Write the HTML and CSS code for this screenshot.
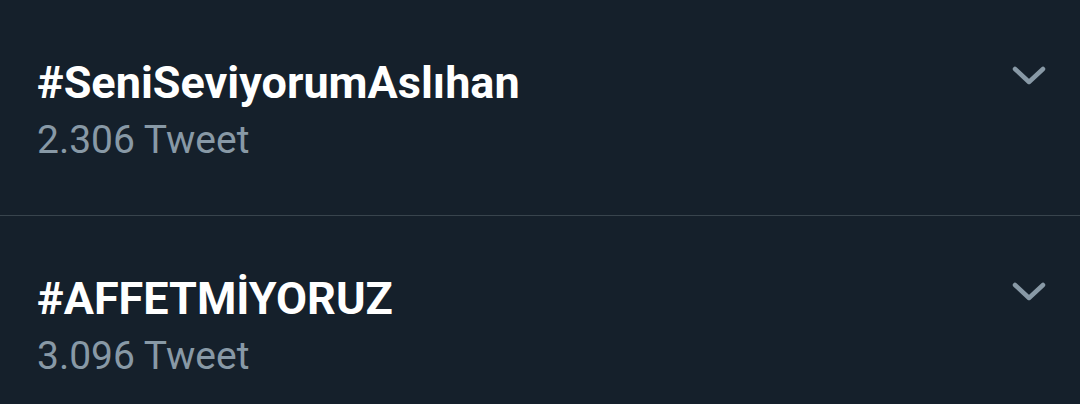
FILE: index.html
```html
<!DOCTYPE html>
<html lang="tr">
<head>
<meta charset="utf-8">
<link rel="stylesheet" href="styles.css">
</head>
<body>
<div class="list">
  <div class="trend">
    <div class="info">
      <div class="title">#SeniSeviyorumAslıhan</div>
      <div class="count">2.306 Tweet</div>
    </div>
    <svg class="chev" viewBox="0 0 36 24" width="36" height="24"><path d="M4 5 L18 18 L32 5" fill="none" stroke="#8899a6" stroke-width="4.5" stroke-linecap="round" stroke-linejoin="round"/></svg>
  </div>
  <div class="trend">
    <div class="info">
      <div class="title">#AFFETMİYORUZ</div>
      <div class="count">3.096 Tweet</div>
    </div>
    <svg class="chev" viewBox="0 0 36 24" width="36" height="24"><path d="M4 5 L18 18 L32 5" fill="none" stroke="#8899a6" stroke-width="4.5" stroke-linecap="round" stroke-linejoin="round"/></svg>
  </div>
</div>
</body>
</html>
```
FILE: styles.css
```css
html, body {
  margin: 0;
  padding: 0;
  background: #15202b;
}
body {
  font-family: Roboto, "Liberation Sans", sans-serif;
}
.list {
  display: flex;
  flex-direction: column;
}
.trend {
  display: flex;
  justify-content: space-between;
  align-items: flex-start;
  padding: 56px 33px 0 37px;
  height: 159px;
}
.trend + .trend {
  border-top: 1px solid #38444d;
  height: 131px;
}
.info {
  display: flex;
  flex-direction: column;
  gap: 7px;
}
.title {
  color: #ffffff;
  font-weight: 700;
  font-size: 45px;
  line-height: 54px;
}
.count {
  color: #8899a6;
  font-size: 39px;
  line-height: 47px;
}
.chev {
  display: block;
  margin-top: 8px;
}
```
